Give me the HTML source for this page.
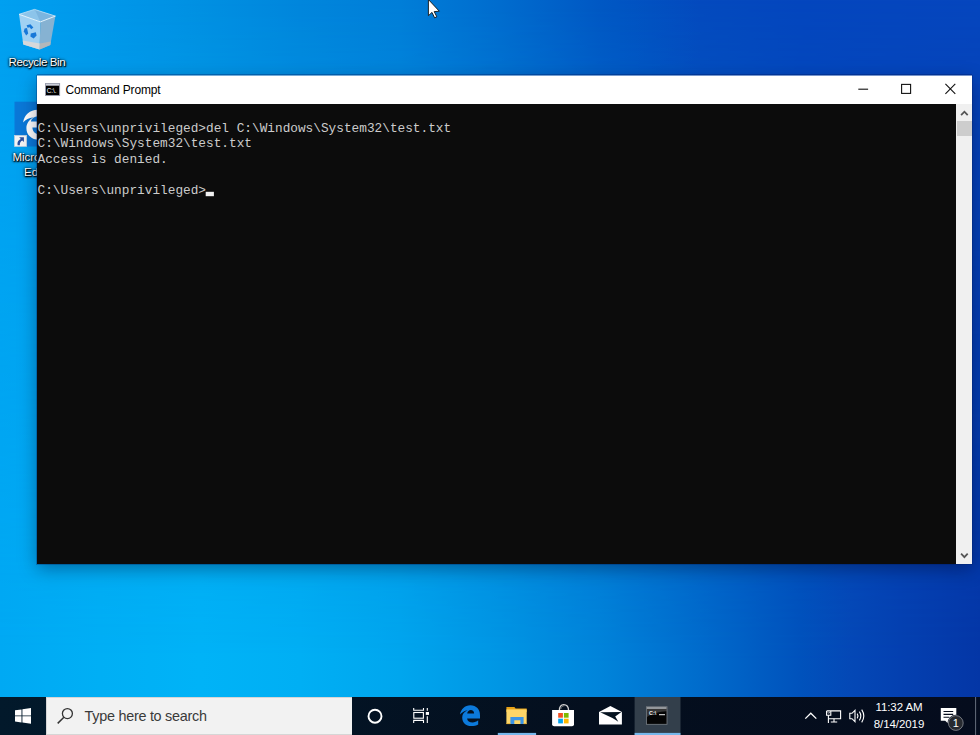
<!DOCTYPE html>
<html><head><meta charset="utf-8"><title>Desktop</title>
<style>
html,body{margin:0;padding:0;}
body{width:980px;height:735px;overflow:hidden;position:relative;font-family:"Liberation Sans",sans-serif;
background:#0060c8;}
#wall{position:absolute;left:0;top:0;width:980px;height:697px;background:linear-gradient(to right,#00a0f0 0.00%,#0098ea 10.20%,#0090e2 20.41%,#0086dc 30.61%,#007ed8 40.82%,#006cce 51.02%,#0058c4 61.22%,#044abe 71.43%,#0446be 81.63%,#0646be 100.00%);}
#wall2{position:absolute;left:0;top:0;width:980px;height:697px;background:linear-gradient(to right,#00a9f3 0.00%,#00aff5 10.20%,#00b3f7 20.41%,#00aff4 30.61%,#00a6ee 40.82%,#0096e4 51.02%,#0084da 61.22%,#006ccc 71.43%,#0052bc 81.63%,#0448b6 86.73%,#0440b0 91.84%,#0436a6 100.00%);-webkit-mask-image:linear-gradient(to bottom,rgba(0,0,0,0) 0%,rgba(0,0,0,1) 95%);mask-image:linear-gradient(to bottom,rgba(0,0,0,0) 0%,rgba(0,0,0,1) 95%);}
.abs{position:absolute;}
/* window */
#win{position:absolute;left:37px;top:76px;width:935px;height:488px;background:#0c0c0c;box-shadow:0 5px 17px rgba(0,0,30,.36),0 0 0 1px rgba(0,40,120,.3);}
#win:before{content:"";position:absolute;left:0;top:-1px;width:935px;height:1px;background:rgba(235,242,252,.5);box-shadow:0 -1px 0 rgba(0,20,90,.3);}
#title{position:absolute;left:0;top:0;width:935px;height:28px;background:#fff;}
#title .txt{position:absolute;left:28.5px;top:7px;font-size:12px;letter-spacing:-0.18px;color:#000;white-space:nowrap;}
#con{position:absolute;left:0;top:28px;width:919px;height:460px;background:#0c0c0c;}
#con pre{position:absolute;left:0.5px;top:17px;margin:0;font-family:"Liberation Mono",monospace;font-size:12.77px;line-height:15.37px;color:#ccc;}
#sb{position:absolute;left:919px;top:28px;width:16px;height:460px;background:#f0f0f0;}
#thumb{position:absolute;left:1px;top:17px;width:15px;height:15px;background:#cdcdcd;}
/* taskbar */
#tb{position:absolute;left:0;top:697px;width:980px;height:38px;background:linear-gradient(to right,#02192b 0%,#031425 30%,#040f1e 60%,#050c1d 100%);}
#search{position:absolute;left:46px;top:0;width:306px;height:38px;background:#f2f2f2;box-sizing:border-box;border:1px solid #d6d6d6;border-right:0;}
#search .t{position:absolute;left:37.6px;top:10px;font-size:14.4px;color:#3a3a3a;letter-spacing:-0.27px;white-space:nowrap;}
.ul{position:absolute;height:2px;top:36px;background:#76b9ed;}
#clock{position:absolute;left:868px;top:1.8px;letter-spacing:-0.08px;width:62px;text-align:center;color:#fff;font-size:11.5px;line-height:17px;}
.lbl{position:absolute;color:#fff;font-size:11.5px;line-height:13px;white-space:nowrap;text-shadow:0 1px 2px #000,0 0 3px #000,1px 1px 1px #000;}
</style></head><body>
<div id="wall"></div><div id="wall2"></div>

<svg class="abs" style="left:0;top:0" width="120" height="200" viewBox="0 0 120 200">
 <!-- recycle bin -->
 <path d="M19 14.3L34.5 9.4L55.4 16.1L40.4 21.9Z" fill="#8cc4ea"/>
 <path d="M34.5 9.4L55.4 16.1L40.4 21.9L36 12Z" fill="#6fa9d6" opacity=".55"/>
 <path d="M19 14.3L40.4 21.9L39.6 49.5L23.3 44.4Z" fill="#aad4f3" opacity=".94"/>
 <path d="M40.4 21.9L55.4 16.1L50.3 44.9L39.6 49.5Z" fill="#86b2d2"/>
 <path d="M22.7 40.4L39.8 43.6L39.6 49.5L23.3 44.4Z" fill="#d6d8da"/>
 <path d="M39.8 43.6L50.8 41.6L50.3 44.9L39.6 49.5Z" fill="#b3b7ba"/>
 <path d="M19 14.3L40.4 21.9L55.4 16.1" stroke="#e6f4fc" stroke-width="1" fill="none"/>
 <path d="M19 14.3L34.5 9.4L55.4 16.1" stroke="#c4e2f6" stroke-width=".8" fill="none"/>
 <g fill="#1878d8"><path d="M26.6 25.2L30.4 24.2L33.4 27.4L31.2 29.3L29.6 27.2L27.6 27.8Z"/><path d="M24.6 28.4L27 28L28.2 33.4L26.2 35.4L23.8 31.6Z"/><path d="M30.8 33.6L35.8 32.2L36.6 35.4L33.6 38.4L30.4 36.6Z"/></g>
 <!-- edge shortcut tile -->
 <rect x="14.5" y="101.7" width="46" height="44.8" fill="#0a78d8"/>
 <path d="M23.1 122.4C24.3 115 30 109.8 37.6 109.8C46 109.8 51.6 115.6 51.6 124.2V127.4H32.4C32.6 131.8 35.8 134.4 40.6 134.4C44.2 134.4 47.4 133.4 50.2 131.8V137.4C47.2 139 43.6 139.8 39.4 139.8C31 139.8 26.4 134.6 26.4 128C26.4 123.6 29.4 119.4 33.4 117.3C29 118 25.6 119.8 23.1 122.4Z" fill="#fff"/>
 <path d="M30.9 121.4C31.6 118.6 34.4 116.6 37.8 116.6C41.8 116.6 44.4 118.4 44.6 121.4Z" fill="#0a78d8"/>
 <rect x="14.5" y="135.4" width="12.2" height="11.1" fill="#f4f4f4" stroke="#c8d4e0" stroke-width=".6"/>
 <path d="M19.2 137.3H23.9V142L22.3 140.4C20.4 141.2 19.6 143 19.9 145.2L17.6 145.2C17 142 18.4 140 20.8 138.9Z" fill="#2a4fa0"/>
</svg>
<div class="lbl" style="left:8.6px;top:56.4px;letter-spacing:-0.36px;">Recycle Bin</div>
<div class="lbl" style="left:12.4px;top:151.4px;">Microsoft</div>
<div class="lbl" style="left:24px;top:165.6px;">Edge</div>
<svg class="abs" style="left:420px;top:0" width="30" height="24" viewBox="420 0 30 24"><path d="M428.4 -0.5V15.7L432 12.4L434.6 17.8L436.8 16.8L434.2 11.6L439.3 11.2Z" fill="#fff" stroke="#111" stroke-width=".9" stroke-linejoin="round"/></svg>

<div id="win">
 <div id="title">
  <svg class="abs" style="left:8px;top:7px" width="16" height="14" viewBox="0 0 16 14"><rect x=".45" y=".45" width="14.2" height="12.1" fill="#000" stroke="#9a9eae" stroke-width=".9"/><rect x=".9" y=".8" width="13.3" height="1.9" fill="#cdd1dc"/><text x="1.7" y="10.1" font-family="Liberation Sans,sans-serif" font-size="6.3" fill="#fff">C:\.</text></svg>
  <span class="txt">Command Prompt</span>
  <svg class="abs" style="left:816px;top:3px" width="110" height="22" viewBox="0 0 110 22">
   <path d="M5.3 10.2H15.1" stroke="#111" stroke-width="1.1" fill="none"/>
   <rect x="48.6" y="5.4" width="9" height="9" stroke="#111" stroke-width="1.1" fill="none"/>
   <path d="M92.4 4.9L102.3 14.9M102.3 4.9L92.4 14.9" stroke="#111" stroke-width="1.1" fill="none"/>
  </svg>
 </div>
 <div id="con"><pre>C:\Users\unprivileged&gt;del C:\Windows\System32\test.txt
C:\Windows\System32\test.txt
Access is denied.

C:\Users\unprivileged&gt;</pre><svg class="abs" style="left:160px;top:80px" width="30" height="20" viewBox="0 0 30 20"><rect x="8.7" y="7.8" width="8.2" height="4.4" fill="#f0f0f0"/></svg></div>
 <div id="sb"><div id="thumb"></div>
  <svg class="abs" style="left:0;top:0" width="16" height="460" viewBox="0 0 16 460"><path d="M5.1 11.1L8.4 7.7L11.7 11.1" stroke="#555" stroke-width="1.8" fill="none"/><path d="M5.1 449.7L8.4 453.1L11.7 449.7" stroke="#555" stroke-width="1.8" fill="none"/></svg>
 </div>
</div>

<div id="tb">
 <div id="search"><span class="t">Type here to search</span></div>
<svg class="abs" style="left:0;top:0" width="980" height="38" viewBox="0 697 980 38">
  <rect x="634.6" y="697" width="45.9" height="38" fill="#333f4b"/><rect x="634.6" y="732.9" width="45.9" height="2.2" fill="#76b8ec"/><rect x="497.8" y="732.9" width="38.3" height="2.2" fill="#76b8ec"/>
  <!-- start -->
  <path d="M15 710.3L21.5 709.4V715.4H15ZM22.4 709.3L31 708.1V715.4H22.4ZM15 716.3H21.5V722.4L15 721.5ZM22.4 716.3H31V723.7L22.4 722.5Z" fill="#fff"/>
  <!-- search glass -->
  <circle cx="67.4" cy="713.6" r="5" stroke="#333" stroke-width="1.3" fill="none"/><path d="M63.9 717.3L57.7 723.4" stroke="#333" stroke-width="1.5" fill="none"/>
  <!-- cortana -->
  <circle cx="375" cy="716.2" r="6.5" stroke="#fff" stroke-width="1.9" fill="none"/>
  <!-- task view -->
  <g stroke="#fff" stroke-width="1.1" fill="none"><rect x="413.8" y="712.5" width="9.6" height="5.7"/><path d="M413.7 708.1V710.3H423.5V708.1M413.7 722.9V720.4H423.5V722.9M427.3 708.1V710.7M427.3 716.3V722.9"/></g><rect x="425.8" y="712" width="3.2" height="2.9" fill="#fff"/>
  <!-- edge -->
  <path fill-rule="evenodd" d="M460 714.4C460.8 709.6 464.8 705.3 470.4 705.3C476.4 705.3 480 709.6 480 715.2V718.4H467.1C467.3 721 469.6 722.4 472.6 722.4C474.6 722.4 476.6 721.6 478.2 720.2V724.5C476.4 725.6 474 726.1 471.4 726.1C465.8 726.1 462.2 722.4 462.2 717.4C462.2 714 464.4 711.4 467.6 710.2C464.6 710.8 462 712.2 460 714.4ZM467.2 713.5H474.1C474.1 711.4 472.8 710 470.8 710C469 710 467.5 711.4 467.2 713.5Z" fill="#0c7adb"/>
  <!-- explorer -->
  <path d="M506.4 707H514.4L515.6 708.6H526.7V712H506.4Z" fill="#e6a117"/><rect x="506.4" y="709.4" width="20.3" height="14.6" fill="#fdd668"/><path d="M506.4 709.4H515L516 708.5H526.7V710.4H506.4Z" fill="#f3bf3f" opacity=".0"/><path d="M510.4 717H523.6V724.1H520.4V720.3H514.3V724.1H510.4Z" fill="#3a94e6"/><rect x="506.4" y="723.3" width="4" height=".8" fill="#e2a92c"/><rect x="523.6" y="723.3" width="3.1" height=".8" fill="#e2a92c"/>
  <!-- store -->
  <path d="M559.4 710.6C559.2 706.4 561.2 704.7 563.6 704.7C566.4 704.7 568.4 706.6 568.6 710.4" stroke="#d4d4d4" stroke-width="1.3" fill="none"/><path d="M560.8 709C561 706.6 562.6 705.6 564.4 705.8" stroke="#9a9a9a" stroke-width=".8" fill="none"/><path d="M552.1 710.1H574V724.3Q574 726.3 572 726.3H554.1Q552.1 726.3 552.1 724.3Z" fill="#fff"/>
  <rect x="558.2" y="713" width="4.7" height="4.7" fill="#f25022"/><rect x="563.9" y="713" width="4.7" height="4.7" fill="#7fba00"/><rect x="558.2" y="718.7" width="4.7" height="4.7" fill="#00a4ef"/><rect x="563.9" y="718.7" width="4.7" height="4.7" fill="#ffb900"/>
  <!-- mail -->
  <path d="M599 712L610.4 705.9L621.9 712V724.4H599Z" fill="#fff"/><path d="M600.2 712.3L621.4 712L615.2 716.6C616.4 718.6 617.4 720.2 618.3 721.8C616.4 720.4 614.2 719 612.4 717.9Z" fill="#04121f"/>
  <!-- cmd -->
  <rect x="646.4" y="706.7" width="20.6" height="17.6" fill="#050505" stroke="#7a8088" stroke-width=".8"/><rect x="646.8" y="707.1" width="19.8" height="1.8" fill="#a4a8ac"/><path d="M647 709H666.6V711.2C660 711.6 652 713.4 647 717Z" fill="#fff" opacity=".2"/><text x="649" y="715" font-family="Liberation Sans,sans-serif" font-size="5.4" font-weight="bold" fill="#eee">C:\</text><rect x="659" y="714.2" width="6" height="1" fill="#eee"/>
  <!-- tray chevron -->
  <path d="M805.3 718.6L810.8 713.2L816.3 718.6" stroke="#fff" stroke-width="1.3" fill="none"/>
  <!-- network -->
  <g stroke="#fff" stroke-width="1.1" fill="none"><path d="M826.6 710.9H840.6V718.8H828.4"/><path d="M826.6 710.9V715.3H830.8V710.9"/><path d="M828.4 715.3V722.9M834 718.8V721.6M830.8 722H837.2"/><path d="M827.8 712.2L828.7 713.3L829.8 712.2" stroke-width=".8"/></g>
  <!-- volume -->
  <g stroke="#fff" stroke-width="1.1" fill="none"><path d="M849.8 713.3H852L855 710.4V721.6L852 718.7H849.8Z"/><path d="M857.2 713.6Q858.8 716 857.2 718.4M859.4 711.6Q862.2 716 859.4 720.4M861.7 709.6Q865.9 716 861.7 722.4"/></g>
  <!-- notification -->
  <path d="M940.8 707.9H956.3V720.7H948.6L948.6 724L945.2 720.7H940.8Z" fill="#fff"/><path d="M943.5 711.5H953.2M943.5 714.4H953.2M943.5 717.3H949.2" stroke="#050c1d" stroke-width="1.1"/>
  <circle cx="955.8" cy="723" r="8.3" fill="#050c1d"/><circle cx="955.8" cy="723" r="7.4" fill="#272a30" stroke="#8a8e96" stroke-width=".8"/><text x="955.7" y="726.6" text-anchor="middle" font-family="Liberation Sans,sans-serif" font-size="11" fill="#fff">1</text>
  <rect x="975" y="697" width="1.1" height="38" fill="#5c6472"/>
 </svg>
 <div id="clock">11:32 AM<br>8/14/2019</div>
</div>
</body></html>
